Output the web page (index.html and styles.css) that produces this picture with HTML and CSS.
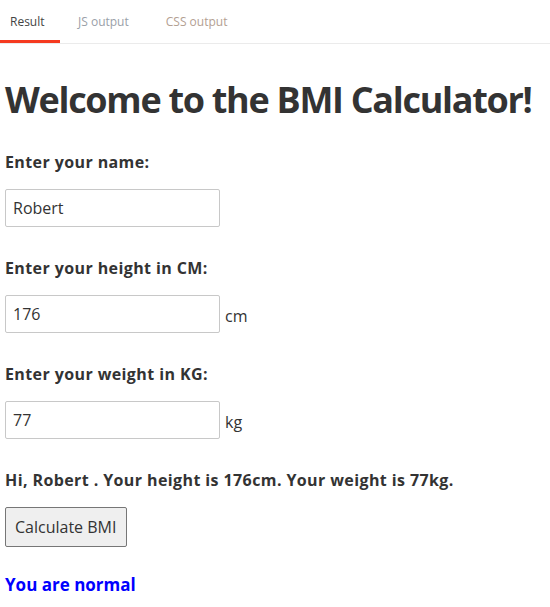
FILE: index.html
```html
<!DOCTYPE html>
<html lang="en">
<head>
<meta charset="utf-8">
<title>BMI Calculator</title>
<link rel="stylesheet" href="styles.css">
</head>
<body>
<nav class="tabs">
  <a class="tab active">Result</a>
  <a class="tab js">JS output</a>
  <a class="tab css">CSS output</a>
</nav>
<main class="app">
  <h1 class="title">Welcome to the BMI Calculator!</h1>
  <div class="field">
    <label class="label">Enter your name:</label>
    <div class="row"><input class="input" type="text" value="Robert"></div>
  </div>
  <div class="field">
    <label class="label">Enter your height in CM:</label>
    <div class="row"><input class="input" type="text" value="176"><span class="unit">cm</span></div>
  </div>
  <div class="field">
    <label class="label">Enter your weight in KG:</label>
    <div class="row"><input class="input" type="text" value="77"><span class="unit">kg</span></div>
  </div>
  <p class="summary">Hi, Robert . Your height is 176cm. Your weight is 77kg.</p>
  <div class="row"><button class="btn">Calculate BMI</button></div>
  <p class="result">You are normal</p>
</main>
</body>
</html>
```
FILE: styles.css
```css
* { box-sizing: border-box; }
html, body { margin: 0; padding: 0; background: #fff; }
body { font-family: "Open Sans", "Noto Sans", sans-serif; color: #333; }

.tabs {
  display: flex;
  height: 44px;
  border-bottom: 1px solid #ebebeb;
  font-size: 12px;
}
.tab {
  display: flex;
  align-items: center;
  padding: 0 10px;
  height: 43px;
  color: #a3a3a3;
  margin-right: 16px;
}
.tab.active {
  color: #444;
  border-bottom: 3px solid #f53a1f;
  padding-top: 2px;
  width: 60px;
  margin-right: 8px;
}
.tab.js { color: #9aa0a8; }
.tab.css { color: #b3a092; margin-left: 1px; }

.app { padding: 0 5px; }
.title {
  font-size: 36px;
  font-weight: 700;
  line-height: 40px;
  letter-spacing: -1.3px;
  white-space: nowrap;
  margin: 36px 0 31px;
}
.field { display: flex; flex-direction: column; }
.label,
.summary {
  font-weight: 700;
  font-size: 16px;
  line-height: 22px;
  letter-spacing: 0.4px;
  margin: 0 0 16px;
}
.row { display: flex; align-items: center; }
.field .row { margin-bottom: 30px; }
.input {
  width: 215px;
  height: 38px;
  border: 1px solid #c8c8c8;
  border-radius: 2px;
  padding: 0 7px;
  font: inherit;
  font-size: 16px;
  color: #333;
}
.unit { margin-left: 5px; font-size: 16px; margin-top: 4px; }
.btn {
  font: inherit;
  font-size: 16px;
  color: #333;
  height: 40px;
  padding: 0 10px 0 9px;
  background: #efefef;
  border: 1px solid #767676;
  border-radius: 2px;
}
.result {
  color: #0000ff;
  font-weight: 700;
  font-size: 17px;
  line-height: 22px;
  margin: 27px 0 0;
}
```
